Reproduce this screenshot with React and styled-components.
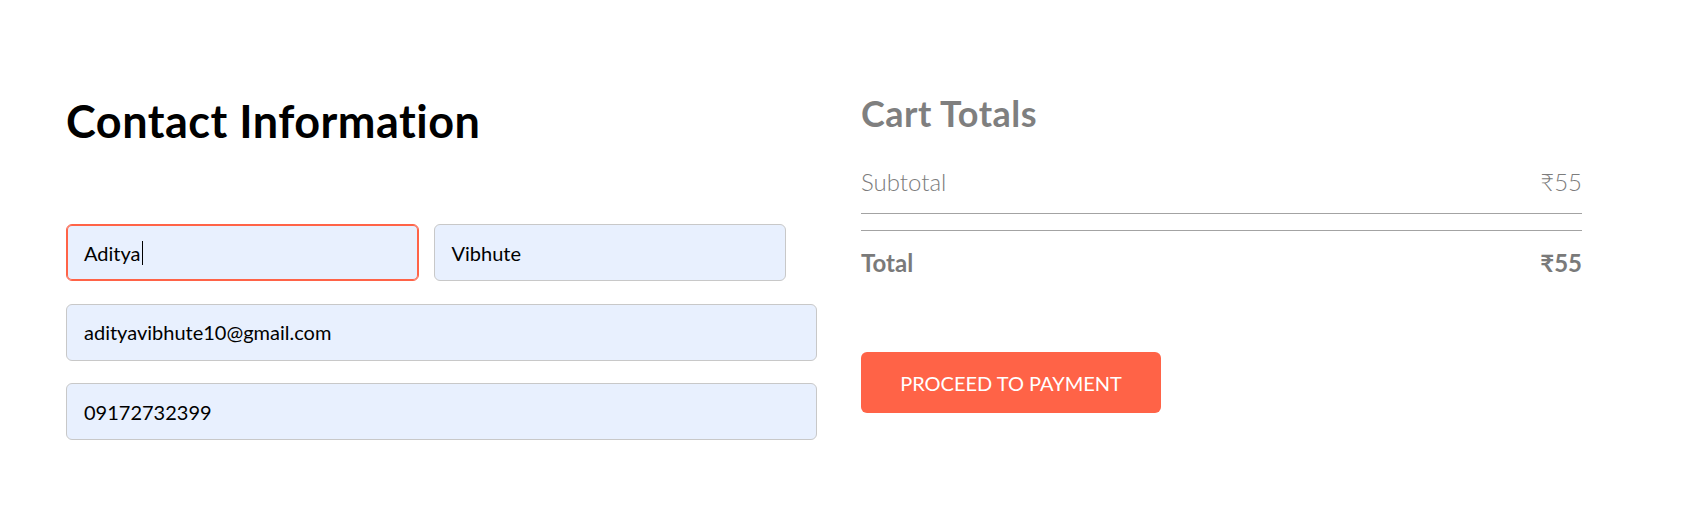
import React from "react";
import styled, { createGlobalStyle } from "styled-components";

const GlobalStyle = createGlobalStyle`
  * {
    box-sizing: border-box;
  }
  body {
    margin: 0;
    background: #ffffff;
    font-family: "Lato", "Noto Sans", sans-serif;
  }
`;

const Page = styled.div`
  display: flex;
  align-items: flex-start;
  gap: 44px;
  padding: 92px 0 0 66px;
`;

const Left = styled.form`
  width: 751px;
  display: flex;
  flex-direction: column;
`;

const Title = styled.h1`
  margin: 2px 0 76px;
  font-size: 45px;
  line-height: 54px;
  font-weight: 700;
  letter-spacing: 0.5px;
  color: #000;
`;

const Fields = styled.div`
  display: flex;
  flex-direction: column;
  gap: 22.5px;
`;

const MultiFields = styled.div`
  display: flex;
  gap: 15px;
  width: 720px;
`;

const Field = styled.div`
  flex: ${({ $grow }) => ($grow ? "1 1 0" : "none")};
  height: 57px;
  display: flex;
  align-items: center;
  padding: 0 17px;
  background: #e8f0fe;
  border: 1.5px solid ${({ $focused }) => ($focused ? "#ff6347" : "#c8c8c8")};
  box-shadow: ${({ $focused }) => ($focused ? "inset 0 0 0 1px #ff6347" : "none")};
  border-radius: 6px;
  font-size: 20px;
  line-height: 24px;
  color: #000;
`;

const Caret = styled.span`
  display: inline-block;
  width: 1px;
  height: 24px;
  margin-left: 1px;
  background: #000;
`;

const Right = styled.div`
  width: 721px;
  display: flex;
  flex-direction: column;
`;

const CartTitle = styled.h2`
  margin: 0 0 32px;
  font-size: 36px;
  line-height: 43px;
  font-weight: 700;
  letter-spacing: 0.5px;
  color: #7f7f7f;
`;

const Row = styled.div`
  display: flex;
  justify-content: space-between;
  margin-top: ${({ $top }) => $top || 0}px;
  font-size: 24px;
  line-height: 29px;
  font-weight: ${({ $bold }) => ($bold ? 700 : 300)};
  color: ${({ $bold }) => ($bold ? "#7a7a7a" : "#7c7c7c")};
`;

const Divider = styled.hr`
  margin: ${({ $top }) => $top}px 0 0;
  border: none;
  border-top: 1.5px solid #a3a3a3;
`;

const PayButton = styled.button`
  margin-top: 75px;
  width: 300px;
  height: 61px;
  border: none;
  border-radius: 6px;
  background: #ff6347;
  color: #fff;
  font-family: inherit;
  font-size: 20px;
  font-weight: 400;
  cursor: pointer;
`;

export default function App() {
  return (
    <>
      <GlobalStyle />
      <Page>
        <Left>
          <Title>Contact Information</Title>
          <Fields>
            <MultiFields>
              <Field $grow $focused>
                Aditya
                <Caret />
              </Field>
              <Field $grow>Vibhute</Field>
            </MultiFields>
            <Field>adityavibhute10@gmail.com</Field>
            <Field>09172732399</Field>
          </Fields>
        </Left>
        <Right>
          <CartTitle>Cart Totals</CartTitle>
          <Row>
            <span>Subtotal</span>
            <span>₹55</span>
          </Row>
          <Divider $top={17} />
          <Divider $top={16} />
          <Row $bold $top={17}>
            <span>Total</span>
            <span>₹55</span>
          </Row>
          <div>
            <PayButton type="button">PROCEED TO PAYMENT</PayButton>
          </div>
        </Right>
      </Page>
    </>
  );
}
